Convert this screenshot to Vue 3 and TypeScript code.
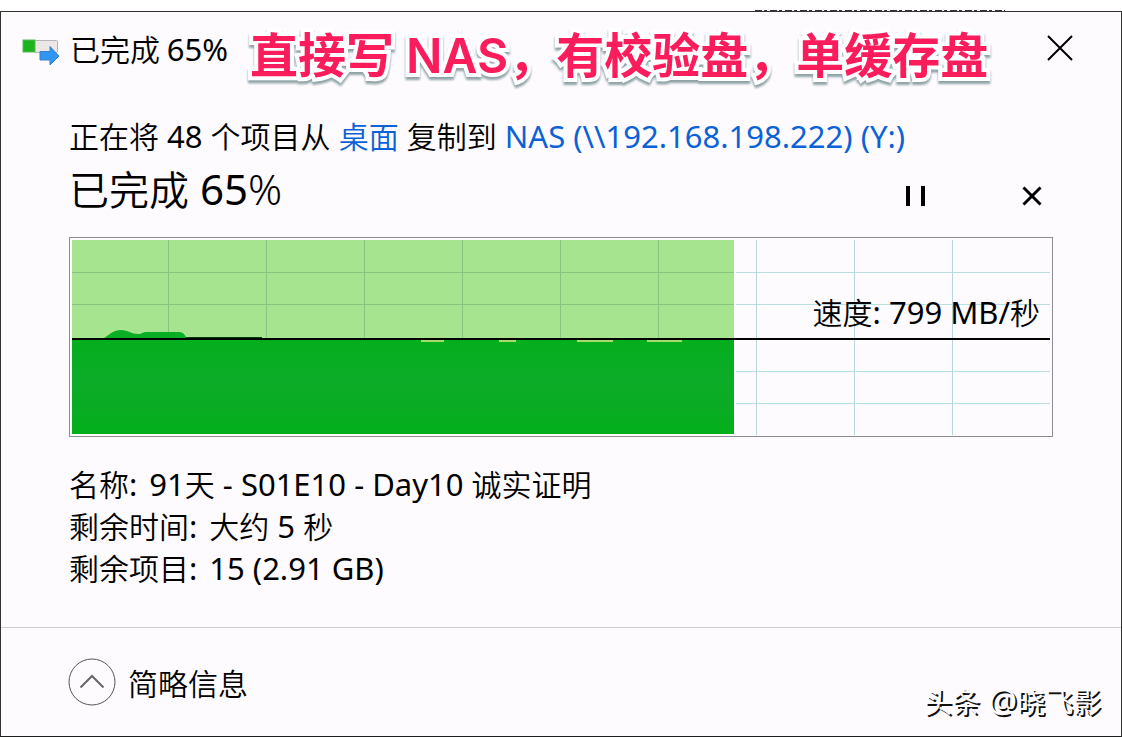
<script setup lang="ts">
import { ref } from 'vue'

const percent = ref(65)
const paused = ref(false)
const expanded = ref(true)

const columns = [98, 196, 294, 392, 490, 588, 686, 784, 882]
const rows = [34, 66, 133, 165]
const dips = [
  { x: 351, w: 23 },
  { x: 429, w: 17 },
  { x: 507, w: 36 },
  { x: 577, w: 35 },
]
const filled = 662
</script>

<template>
  <div class="page">
    <div class="strip"><span class="specks"></span></div>
    <main class="window">
      <header class="titlebar">
        <svg class="app-icon" width="38" height="28" viewBox="0 0 38 28" aria-hidden="true">
          <rect x="12.5" y="2.5" width="23" height="12" rx="1" fill="#ece6e6" stroke="#b9b3b8" />
          <rect x="1" y="2" width="12" height="12" fill="#1db51d" stroke="#58b858" />
          <path d="M18 13.5h10V8.5l9 9.5-9 9v-5H18z" fill="#2f97f3" stroke="#3b80c8" />
        </svg>
        <span class="title">已完成 <span class="latin">{{ percent }}%</span></span>
        <strong class="caption">直接写<span class="caption-latin">&nbsp;NAS</span>，有校验盘，单缓存盘</strong>
        <button class="close" type="button" aria-label="关闭">
          <svg width="26" height="26" viewBox="0 0 26 26"><path d="M1 1l24 24M25 1L1 25" stroke="#000" stroke-width="2" /></svg>
        </button>
      </header>

      <section class="content">
        <p class="summary">
          正在将<span class="latin">&nbsp;48&nbsp;</span>个项目从<span class="latin">&nbsp;</span><a href="#desktop">桌面</a><span class="latin">&nbsp;</span>复制到<span class="latin">&nbsp;</span><a href="#nas" class="latin">NAS (\\192.168.198.222) (Y:)</a>
        </p>
        <div class="status">
          <h1>已完成<span class="status-latin">&nbsp;{{ percent }}<span class="sign">%</span></span></h1>
          <div class="actions">
            <button type="button" aria-label="暂停" @click="paused = !paused">
              <svg width="20" height="20" viewBox="0 0 20 20"><path d="M0 0h4v20H0zM15 0h4v20h-4z" /></svg>
            </button>
            <button type="button" aria-label="取消">
              <svg width="20" height="20" viewBox="0 0 20 20"><path d="M1.5 1.5l17 17M18.5 1.5l-17 17" stroke="#000" stroke-width="3" /></svg>
            </button>
          </div>
        </div>

        <div class="chart">
          <svg class="plot" viewBox="0 0 982 198" preserveAspectRatio="none" aria-hidden="true">
            <rect x="2" y="2" :width="filled" height="194" fill="#a7e48f" />
            <g shape-rendering="crispEdges">
              <rect v-for="x in columns" :key="'c' + x" :x="x" y="2" width="1" :height="x < filled ? 100 : 195" :fill="x < filled ? '#86c480' : '#b7d6da'" />
              <g v-for="y in rows" :key="'r' + y">
                <rect x="2" :y="y" :width="filled" height="1" fill="#86c480" />
                <rect :x="filled + 4" :y="y" :width="980 - filled - 4" height="1" fill="#b9dedf" />
              </g>
            </g>
            <path d="M33 101C38 97 44 92 51 92C58 92 61 96 68 96C73 96 71 94 78 94H109C114 94 115 98 116 99H191V101z" fill="#0aae24" />
            <rect x="2" y="101" :width="filled" height="95" fill="url(#volume)" />
            <rect v-for="d in dips" :key="d.x" :x="d.x" y="102" :width="d.w" height="2" fill="#a7dc6a" />
            <rect x="2" y="100" width="978" height="2" fill="#000" />
            <rect x="116" y="99" width="76" height="1" fill="#063b0c" />
            <defs>
              <linearGradient id="volume" x1="0" y1="0" x2="0" y2="1">
                <stop offset="0" stop-color="#03ae1c" />
                <stop offset="0.4" stop-color="#0cac28" />
                <stop offset="0.7" stop-color="#0aab24" />
                <stop offset="1" stop-color="#02b01a" />
              </linearGradient>
            </defs>
          </svg>
          <span class="speed">速度<span class="latin">: 799 MB/</span>秒</span>
        </div>

        <dl class="details">
          <div><dt>名称<span class="latin">:</span></dt><dd><span class="latin">91</span>天<span class="latin">&nbsp;- S01E10 - Day10&nbsp;</span>诚实证明</dd></div>
          <div><dt>剩余时间<span class="latin">:</span></dt><dd>大约<span class="latin">&nbsp;5&nbsp;</span>秒</dd></div>
          <div><dt>剩余项目<span class="latin">:</span></dt><dd><span class="latin">15 (2.91 GB)</span></dd></div>
        </dl>
      </section>

      <footer class="footer">
        <button class="toggle" type="button" :aria-expanded="expanded" @click="expanded = !expanded">
          <svg width="48" height="48" viewBox="0 0 48 48" aria-hidden="true">
            <circle cx="24" cy="24" r="23" fill="none" stroke="#555" />
            <path d="M12.5 29.5L24 18l11.5 11.5" fill="none" stroke="#666" stroke-width="2" />
          </svg>
          简略信息
        </button>
        <span class="watermark">头条<span class="watermark-latin">&nbsp;@</span>晓飞影</span>
      </footer>
    </main>
  </div>
</template>

<style>
body {
  margin: 0;
}
</style>

<style scoped>
.page {
  box-sizing: border-box;
  min-height: 100vh;
  display: flex;
  flex-direction: column;
  background: #fff;
  color: #000;
  font-family: "Noto Sans CJK SC", "Noto Sans", sans-serif;
  font-weight: 350;
  font-size: 30px;
  line-height: 42px;
}
.latin {
  font-family: "Noto Sans", "Noto Sans CJK SC", sans-serif;
  font-size: 31px;
  font-weight: 400;
  line-height: 1;
}
.strip {
  height: 11px;
  display: flex;
  align-items: flex-end;
  justify-content: flex-end;
}
.specks {
  width: 250px;
  height: 1px;
  margin-right: 117px;
  background: repeating-linear-gradient(90deg, #333 0 7px, #fff 7px 9px, #333 9px 12px, #fff 12px 15px);
}
.window {
  flex: 1;
  display: flex;
  flex-direction: column;
  margin-bottom: 1px;
  border: 1px solid #333;
  border-bottom-color: #1c1c24;
  background: #fdfbfe;
}
.titlebar {
  display: flex;
  align-items: center;
  height: 72px;
  padding: 0 48px 0 21px;
}
.app-icon {
  margin-top: 8px;
}
.title {
  width: 176px;
  margin-left: 10px;
  white-space: nowrap;
}
.caption {
  margin: 8px auto 0 4px;
  color: #fb1c5c;
  font-size: 48px;
  font-weight: 700;
  line-height: 60px;
  white-space: nowrap;
  -webkit-text-stroke: 8px #fff;
  paint-order: stroke fill;
  stroke-linejoin: round;
  filter: drop-shadow(0 3px 1px #8fa3a6);
}
.caption-latin {
  font-family: Inter, sans-serif;
  font-weight: 600;
  line-height: 1;
}
button {
  padding: 0;
  border: 0;
  background: none;
  color: inherit;
  font: inherit;
  cursor: pointer;
}
button svg {
  display: block;
}
.content {
  flex: 1;
  padding: 30px 68px 0;
}
.summary {
  margin: 0;
  white-space: nowrap;
}
.summary a {
  color: #0b62d6;
  text-decoration: none;
}
.status {
  display: flex;
  align-items: center;
  justify-content: space-between;
  height: 64px;
}
h1 {
  margin: 0;
  font-size: 40px;
  font-weight: 350;
  line-height: 60px;
}
.status-latin {
  font-family: "Noto Sans", sans-serif;
  font-size: 42px;
  font-weight: 400;
  line-height: 1;
}
.sign {
  font-weight: 300;
}
.actions {
  display: flex;
  gap: 96px;
  padding: 16px 11px 0 0;
}
.chart {
  position: relative;
  margin-top: 17px;
  border: 1px solid #8d8b94;
}
.plot {
  display: block;
  width: 100%;
  height: 198px;
}
.speed {
  position: absolute;
  top: 52px;
  right: 12px;
  white-space: nowrap;
}
.details {
  margin: 25px 0 0;
}
.details div {
  display: flex;
  gap: 12px;
}
.details dd {
  margin: 0;
}
.footer {
  display: flex;
  align-items: center;
  justify-content: space-between;
  height: 108px;
  padding: 0 20px 0 67px;
  border-top: 1px solid #cfcdd6;
}
.toggle {
  display: flex;
  align-items: center;
  gap: 12px;
}
.watermark {
  margin-top: 38px;
  color: #fdfbfe;
  font-size: 28px;
  font-weight: 400;
  text-shadow: 2px 2px 0 #111;
}
.watermark-latin {
  font-family: "Noto Sans", sans-serif;
  font-size: 32px;
  line-height: 1;
}
</style>
